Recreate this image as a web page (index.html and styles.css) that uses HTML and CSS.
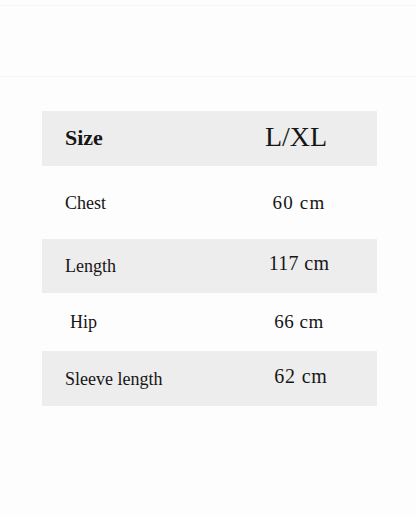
FILE: index.html
```html
<!DOCTYPE html>
<html lang="en">
<head>
<meta charset="utf-8">
<title>Size chart</title>
<link rel="stylesheet" href="styles.css">
</head>
<body>
<div class="page">
  <div class="topbar"></div>
  <div class="chart">
    <div class="row row-head shaded">
      <div class="label label-head">Size</div>
      <div class="value value-head">L/XL</div>
    </div>
    <div class="row row-chest">
      <div class="label">Chest</div>
      <div class="value">60 cm</div>
    </div>
    <div class="row row-length shaded">
      <div class="label">Length</div>
      <div class="value value-raised value-large">117 cm</div>
    </div>
    <div class="row row-hip">
      <div class="label label-indent">Hip</div>
      <div class="value value-hip">66 cm</div>
    </div>
    <div class="row row-sleeve shaded">
      <div class="label">Sleeve length</div>
      <div class="value value-raised value-sleeve">62 cm</div>
    </div>
  </div>
</div>
</body>
</html>
```

FILE: styles.css
```css
html, body {
  margin: 0;
  padding: 0;
  background: #fdfdfd;
}

.page {
  width: 416px;
  height: 515px;
  font-family: "Liberation Serif", "Times New Roman", serif;
  color: #161616;
}

.topbar {
  margin-top: 5px;
  height: 70px;
  border-top: 1px solid #f6f6f6;
  border-bottom: 1px solid #f4f4f4;
}

.chart {
  margin: 34px 0 0 42px;
  width: 335px;
}

.row {
  display: flex;
  align-items: center;
}

.shaded {
  background: #ededed;
}

.row-head { height: 55px; }
.row-chest { height: 73px; }
.row-length { height: 54px; }
.row-hip { height: 58px; }
.row-sleeve { height: 55px; }

.label {
  width: 177px;
  box-sizing: border-box;
  padding-left: 23px;
  font-size: 18px;
  line-height: 24px;
}

.label-head {
  font-size: 22px;
  font-weight: 600;
  padding-bottom: 1px;
}

.label-indent {
  padding-left: 28px;
}

.value {
  flex: 1;
  text-align: center;
  font-size: 19px;
  line-height: 24px;
  letter-spacing: 1.2px;
  padding-left: 2px;
}

.value-head {
  font-size: 28px;
  letter-spacing: 0;
  line-height: 32px;
  padding-left: 0;
  padding-right: 4px;
  padding-bottom: 3px;
}

.value-raised {
  padding-bottom: 6px;
}

.value-large {
  font-size: 20px;
  letter-spacing: 0.3px;
}

.value-hip {
  letter-spacing: 0.5px;
}

.value-sleeve {
  font-size: 20px;
  letter-spacing: 0.8px;
  padding-left: 6px;
}
```
